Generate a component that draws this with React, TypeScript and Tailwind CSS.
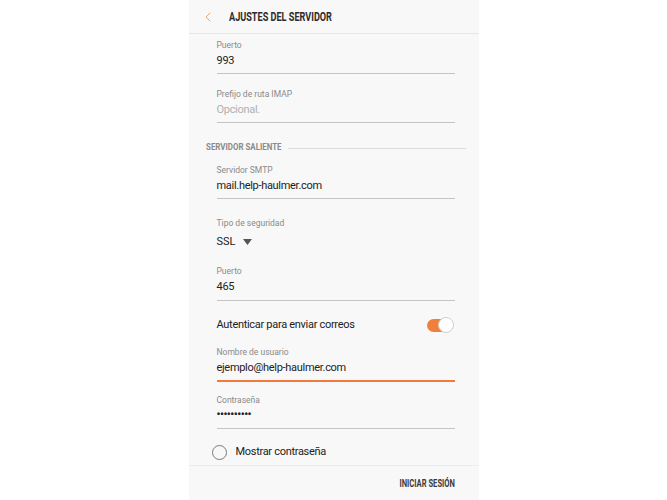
import { ChevronLeft } from "lucide-react";

const font = { fontFamily: "Roboto, 'Noto Sans', sans-serif" };

function Field({
  label,
  value,
  top,
  muted,
  active,
  pb = "mt-[4px]",
  underline = true,
  children,
}: {
  label: string;
  value?: string;
  top: string;
  muted?: boolean;
  active?: boolean;
  pb?: string;
  underline?: boolean;
  children?: React.ReactNode;
}) {
  return (
    <div className={`ml-[28px] mr-[24px] ${top}`}>
      <div className="h-[12px] text-[8.5px] leading-[12px] text-[#8a8a8a]">{label}</div>
      {children ?? (
        <div
          className={`mt-[2px] h-[16px] text-[11px] leading-[16px] tracking-[-0.3px] ${
            muted ? "text-[#b0b0b0]" : "text-[#222]"
          }`}
        >
          {value}
        </div>
      )}
      {underline && (
        <div className={`${pb} ${active ? "h-[2px] bg-[#f07a3e]" : "h-px bg-[#c4c4c4]"}`} />
      )}
    </div>
  );
}

export default function App() {
  return (
    <div className="flex h-[500px] w-[667px] justify-center bg-white" style={font}>
      <div className="flex h-full w-[290px] flex-col bg-[#f8f8f8]">
        <header className="flex h-[34px] shrink-0 items-center border-b border-[#e6e6e6]">
          <ChevronLeft className="ml-[11px] size-[16px] text-[#f0a378]" strokeWidth={1.5} />
          <span className="ml-[13px] inline-block origin-left scale-x-[0.76] whitespace-nowrap text-[12px] font-bold text-[#2b2b2b]">
            AJUSTES DEL SERVIDOR
          </span>
        </header>

        <Field label="Puerto" value="993" top="mt-[5px]" />
        <Field label="Prefijo de ruta IMAP" value="Opcional." muted top="mt-[14px]" />

        <div className="ml-[17px] mr-[13px] mt-[19px] flex h-[12px] items-center">
          <span className="inline-block w-[80px] origin-left scale-x-[0.88] whitespace-nowrap text-[9px] font-bold text-[#8a8a8a]">
            SERVIDOR SALIENTE
          </span>
          <div className="ml-[2px] h-px flex-1 bg-[#dcdcdc]" />
        </div>

        <Field label="Servidor SMTP" value="mail.help-haulmer.com" top="mt-[10px]" />
        <Field label="Tipo de seguridad" top="mt-[18px]" underline={false}>
          <div className="mt-[5px] flex h-[16px] items-center text-[11px] text-[#222]">
            SSL
            <svg className="ml-[7px]" width="9" height="6" viewBox="0 0 9 6">
              <path d="M0 0h9L4.5 6z" fill="#555" />
            </svg>
          </div>
        </Field>
        <Field label="Puerto" value="465" top="mt-[15px]" pb="mt-[5px]" />

        <div className="ml-[28px] mr-[24px] mt-[14px] flex h-[20px] items-center justify-between">
          <span className="text-[11px] tracking-[-0.3px] text-[#222]">Autenticar para enviar correos</span>
          <div className="relative mr-[2px] h-[13px] w-[26px] rounded-full bg-[#f07f3c]">
            <div className="absolute right-[-1px] top-[-1.5px] size-[16px] rounded-full border border-[#cfcfcf] bg-white" />
          </div>
        </div>

        <Field
          label="Nombre de usuario"
          value="ejemplo@help-haulmer.com"
          top="mt-[11px]"
          pb="mt-[4px]"
          active
        />
        <Field label="Contraseña" top="mt-[12px]" pb="mt-[5px]">
          <div className="mt-[1px] h-[16px] text-[11px] font-bold leading-[16px] tracking-[-0.5px] text-[#222]">
            ••••••••••
          </div>
        </Field>

        <div className="ml-[23px] mt-[13px] flex h-[20px] items-center">
          <div className="size-[15px] rounded-full border border-[#7a7a7a]" />
          <span className="ml-[9px] text-[11px] tracking-[-0.3px] text-[#222]">Mostrar contraseña</span>
        </div>

        <div className="mt-auto flex h-[35px] items-center justify-end border-t border-[#ececec] pr-[24px]">
          <span className="inline-block origin-right scale-x-[0.76] whitespace-nowrap text-[10px] font-bold text-[#3a3a3a]">
            INICIAR SESIÓN
          </span>
        </div>
      </div>
    </div>
  );
}
